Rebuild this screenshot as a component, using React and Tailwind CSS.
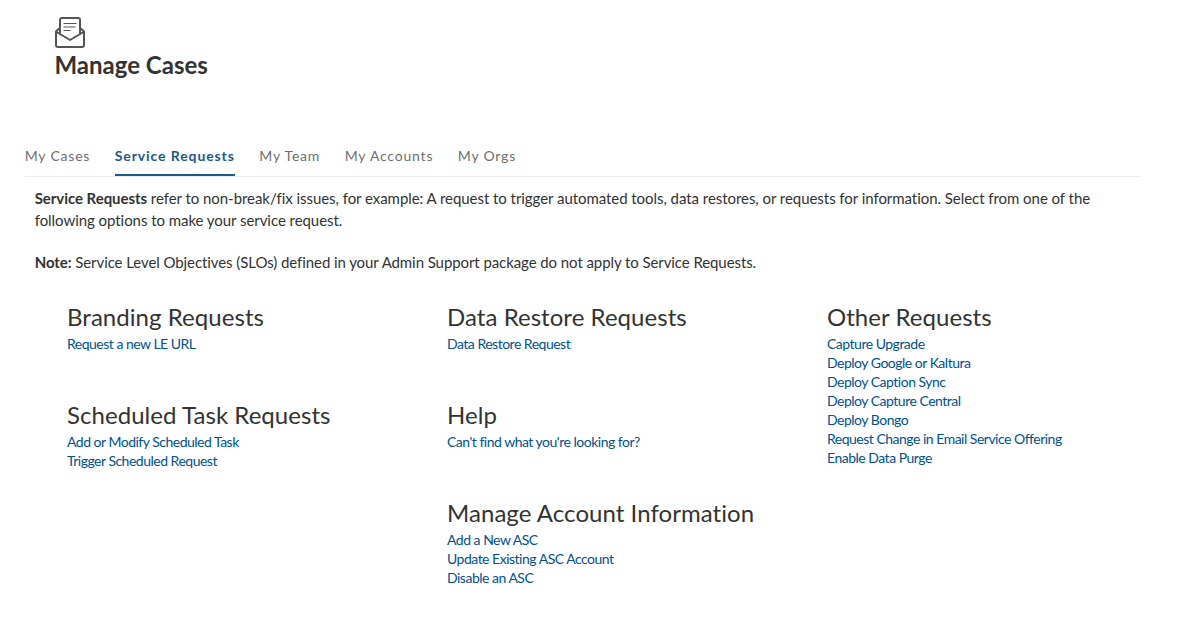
const Section = ({ title, links, className = "" }) => (
  <div className={className}>
    <h3 className="text-[24px] leading-[29px] font-normal tracking-[0.05px] text-[#333333]">{title}</h3>
    <ul className="mt-[3px]">
      {links.map((l) => (
        <li key={l} className="text-[14px] leading-[19px] text-[#005290] tracking-[-0.5px]">
          <a href="#">{l}</a>
        </li>
      ))}
    </ul>
  </div>
);

const Tab = ({ label, active }) => (
  <div
    className={
      active
        ? "h-[38px] pt-[8px] leading-[20px] text-[14px] font-bold tracking-[0.9px] text-[#1d5a88] border-b-2 border-[#1d5a88]"
        : "h-[38px] pt-[8px] leading-[20px] text-[14px] tracking-[0.8px] text-[#6f6f6f]"
    }
  >
    {label}
  </div>
);

export default function App() {
  return (
    <div className="w-[1184px] h-[624px] overflow-hidden bg-white font-['Lato','Carlito','Liberation_Sans',sans-serif] text-[#333333]">
      <header className="pl-[55px] pt-[17px]">
        <svg width="30" height="31" viewBox="0 0 30 31" fill="none" stroke="#555555" strokeWidth="2" strokeLinejoin="round" strokeLinecap="round">
          <path d="M5 16V3a2 2 0 0 1 2-2h16a2 2 0 0 1 2 2v13" />
          <path d="M5 11 1.8 13.6A2 2 0 0 0 1 15.2V28a2 2 0 0 0 2 2h24a2 2 0 0 0 2-2V15.2a2 2 0 0 0-.8-1.6L25 11" />
          <path d="M1.5 15 15 23l13.5-8" />
          <path d="M9 6.5h12M9 10h11M9 13.500h6" strokeWidth="1.200" />
        </svg>
        <h1 className="-ml-[0.5px] mt-0 text-[24px] leading-[34px] font-bold text-[#333333]">Manage Cases</h1>
      </header>

      <nav className="mt-[56px] ml-[24.700px] w-[1116px] h-[39px] flex gap-[24.500px] border-b border-[#eeeeee]">
        <Tab label="My Cases" />
        <Tab label="Service Requests" active />
        <Tab label="My Team" />
        <Tab label="My Accounts" />
        <Tab label="My Orgs" />
      </nav>

      <div className="ml-[34.700px] w-[1080px] mt-[10px] text-[15px] leading-[22px] text-[#333333]">
        <p className="tracking-[-0.05px]">
          <b>Service Requests</b> refer to non-break/fix issues, for example: A request to trigger automated tools, data restores, or requests for information. Select from one of the following options to make your service request.
        </p>
        <p className="mt-[20px] tracking-[-0.08px]">
          <b>Note:</b> Service Level Objectives (SLOs) defined in your Admin Support package do not apply to Service Requests.
        </p>
      </div>

      <div className="ml-[67px] mt-[29px] grid grid-cols-[380px_380px_320px]">
        <div className="flex flex-col gap-[50px]">
          <Section title="Branding Requests" links={["Request a new LE URL"]} className="h-[48px]" />
          <Section title="Scheduled Task Requests" links={["Add or Modify Scheduled Task", "Trigger Scheduled Request"]} />
        </div>
        <div className="flex flex-col gap-[50px]">
          <Section title="Data Restore Requests" links={["Data Restore Request"]} className="h-[48px]" />
          <Section title="Help" links={["Can't find what you're looking for?"]} className="h-[48px]" />
          <Section title="Manage Account Information" links={["Add a New ASC", "Update Existing ASC Account", "Disable an ASC"]} />
        </div>
        <Section
          title="Other Requests"
          links={[
            "Capture Upgrade",
            "Deploy Google or Kaltura",
            "Deploy Caption Sync",
            "Deploy Capture Central",
            "Deploy Bongo",
            "Request Change in Email Service Offering",
            "Enable Data Purge",
          ]}
        />
      </div>
    </div>
  );
}
